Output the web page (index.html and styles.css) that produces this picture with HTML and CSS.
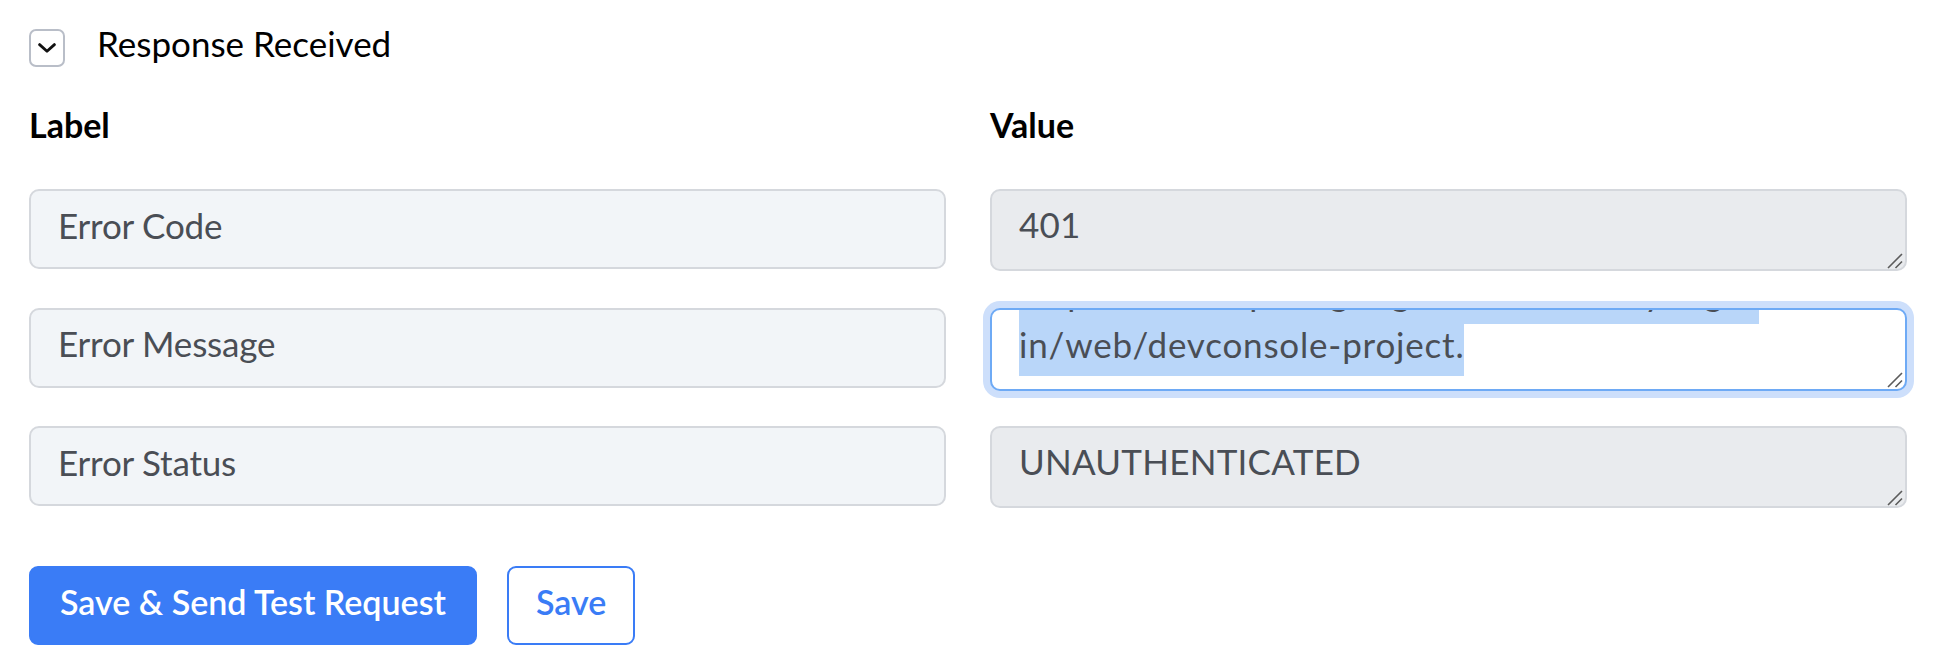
FILE: index.html
```html
<!DOCTYPE html>
<html lang="en">
<head>
<meta charset="utf-8">
<title>Response Received</title>
<link rel="stylesheet" href="styles.css">
</head>
<body>
<div class="page">
  <div class="section-head">
    <button class="toggle" type="button" aria-label="Collapse section">
      <svg class="chevron" width="18" height="10" viewBox="0 0 18 10" aria-hidden="true">
        <path d="M1.6 1.6 L9 8.2 L16.4 1.6" />
      </svg>
    </button>
    <span class="section-title">Response Received</span>
  </div>

  <div class="col-heads">
    <div class="col-head">Label</div>
    <div class="col-head">Value</div>
  </div>

  <div class="rows">
    <input class="label-input" type="text" value="Error Code">
    <div class="value-wrap">
      <textarea class="value-input" readonly>401</textarea>
      <svg class="grip" width="16" height="16" viewBox="0 0 16 16" aria-hidden="true"><path d="M1 15 L15 1 M8.5 15 L15 8.5" /></svg>
    </div>

    <input class="label-input" type="text" value="Error Message">
    <div class="value-wrap">
      <div class="value-input value-focus" tabindex="0">
        <div class="msg-scroll">
          <span class="sel-line">Request is missing required authentication credential. Expected OAuth 2 access token, login cookie or other valid authentication credential. See</span>
          <span class="sel-line sel-url">https://developers.google.com/identity/sign-</span>
          <span class="sel-line">in/web/devconsole-project.</span>
        </div>
      </div>
      <svg class="grip" width="16" height="16" viewBox="0 0 16 16" aria-hidden="true"><path d="M1 15 L15 1 M8.5 15 L15 8.5" /></svg>
    </div>

    <input class="label-input" type="text" value="Error Status">
    <div class="value-wrap">
      <textarea class="value-input" readonly>UNAUTHENTICATED</textarea>
      <svg class="grip" width="16" height="16" viewBox="0 0 16 16" aria-hidden="true"><path d="M1 15 L15 1 M8.5 15 L15 8.5" /></svg>
    </div>
  </div>

  <div class="actions">
    <button class="btn btn-primary" type="button">Save &amp; Send Test Request</button>
    <button class="btn btn-outline" type="button">Save</button>
  </div>
</div>
</body>
</html>
```

FILE: styles.css
```css
* {
  box-sizing: border-box;
}

html,
body {
  margin: 0;
  background: #ffffff;
}

body {
  font-family: Lato, "Noto Sans", sans-serif;
  color: #000000;
}

.page {
  padding: 29px 45px 0 29px;
}

/* collapsible section header */
.section-head {
  display: flex;
  align-items: center;
  gap: 32px;
  height: 38px;
}

.toggle {
  width: 36px;
  height: 38px;
  padding: 0;
  margin: 0;
  border: 2px solid #b9bec8;
  border-radius: 7px;
  background: #ffffff;
  display: flex;
  align-items: center;
  justify-content: center;
}

.chevron path {
  fill: none;
  stroke: #111111;
  stroke-width: 2.8;
  stroke-linecap: round;
  stroke-linejoin: round;
}

.section-title {
  font-size: 35px;
  line-height: 38px;
  padding-bottom: 10px;
}

/* column headings */
.col-heads {
  display: grid;
  grid-template-columns: minmax(0, 1fr) minmax(0, 1fr);
  column-gap: 44px;
  margin-top: 38px;
}

.col-head {
  font-size: 34px;
  font-weight: 700;
  line-height: 40px;
}

/* label / value rows */
.rows {
  display: grid;
  grid-template-columns: minmax(0, 1fr) minmax(0, 1fr);
  column-gap: 44px;
  row-gap: 36.5px;
  align-items: start;
  margin-top: 44px;
}

.label-input {
  display: block;
  width: 100%;
  min-width: 0;
  height: 80px;
  margin: 0;
  padding: 0 27px 9px;
  border: 2px solid #d5d8dd;
  border-radius: 10px;
  background: #f2f5f8;
  color: #4a4e55;
  font-family: inherit;
  font-size: 35px;
  letter-spacing: -0.2px;
  outline: none;
}

.value-wrap {
  position: relative;
  min-width: 0;
  height: 82px;
}

.value-input {
  display: block;
  width: 100%;
  height: 82px;
  margin: 0;
  padding: 13px 27px 0;
  border: 2px solid #d5d8dd;
  border-radius: 10px;
  background: #e9ebee;
  color: #4a4e55;
  font-family: inherit;
  font-size: 35px;
  line-height: 40px;
  letter-spacing: 0.25px;
  resize: none;
  overflow: hidden;
  outline: none;
}

/* focused message field, scrolled to its last line with the text selected */
.value-focus {
  height: 83px;
  padding: 0 27px 13px;
  background: #ffffff;
  border-color: #6eaaf5;
  box-shadow: 0 0 0 7px #cddffb;
  letter-spacing: 0.8px;
}

.msg-scroll {
  height: 100%;
  overflow: hidden;
  display: flex;
  flex-direction: column;
  justify-content: flex-end;
  align-items: flex-start;
}

.sel-line {
  display: block;
  flex: none;
  background: #b9d6f9;
  line-height: 40px;
  padding-bottom: 12px;
  white-space: nowrap;
}

.sel-url {
  letter-spacing: 1.3px;
}

.grip {
  position: absolute;
  right: 4px;
  bottom: 2px;
  pointer-events: none;
}

.grip path {
  fill: none;
  stroke: #5c5c5c;
  stroke-width: 1.6;
}

/* action buttons */
.actions {
  display: flex;
  gap: 30px;
  margin-top: 58px;
}

.btn {
  height: 79px;
  margin: 0;
  padding: 0 29px 8px;
  border-radius: 9px;
  font-family: inherit;
  font-size: 34px;
  font-weight: 600;
  display: inline-flex;
  align-items: center;
}

.btn-primary {
  border: 2px solid #3a7cf6;
  background: #3a7cf6;
  color: #ffffff;
}

.btn-outline {
  border: 2px solid #3a7cf6;
  background: #ffffff;
  color: #3a7cf6;
  padding: 0 27px 8px;
}
```
